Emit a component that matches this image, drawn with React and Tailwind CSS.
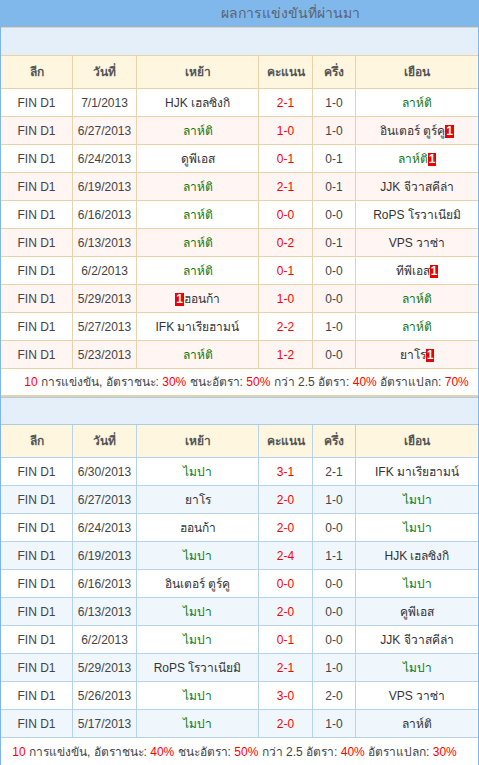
import React from "react";

// Past results for the two teams, shown as two stacked tables
const G = "g"; // marks the highlighted team (green)

const lahtiRows = [
  ["7/1/2013", ["HJK เฮลซิงกิ"], "2-1", "1-0", ["ลาห์ติ", G]],
  ["6/27/2013", ["ลาห์ติ", G], "1-0", "1-0", ["อินเตอร์ ตูร์คู", null, "r1"]],
  ["6/24/2013", ["ดูพีเอส"], "0-1", "0-1", ["ลาห์ติ", G, "r1"]],
  ["6/19/2013", ["ลาห์ติ", G], "2-1", "0-1", ["JJK จีวาสคีล่า"]],
  ["6/16/2013", ["ลาห์ติ", G], "0-0", "0-0", ["RoPS โรวาเนียมิ"]],
  ["6/13/2013", ["ลาห์ติ", G], "0-2", "0-1", ["VPS วาซ่า"]],
  ["6/2/2013", ["ลาห์ติ", G], "0-1", "0-0", ["ทีพีเอส", null, "r1"]],
  ["5/29/2013", ["ฮอนก้า", null, "l1"], "1-0", "0-0", ["ลาห์ติ", G]],
  ["5/27/2013", ["IFK มาเรียฮามน์"], "2-2", "1-0", ["ลาห์ติ", G]],
  ["5/23/2013", ["ลาห์ติ", G], "1-2", "0-0", ["ยาโร", null, "r1"]],
];

const mypaRows = [
  ["6/30/2013", ["ไมปา", G], "3-1", "2-1", ["IFK มาเรียฮามน์"]],
  ["6/27/2013", ["ยาโร"], "2-0", "1-0", ["ไมปา", G]],
  ["6/24/2013", ["ฮอนก้า"], "2-0", "0-0", ["ไมปา", G]],
  ["6/19/2013", ["ไมปา", G], "2-4", "1-1", ["HJK เฮลซิงกิ"]],
  ["6/16/2013", ["อินเตอร์ ตูร์คู"], "0-0", "0-0", ["ไมปา", G]],
  ["6/13/2013", ["ไมปา", G], "2-0", "0-0", ["คูพีเอส"]],
  ["6/2/2013", ["ไมปา", G], "0-1", "0-0", ["JJK จีวาสคีล่า"]],
  ["5/29/2013", ["RoPS โรวาเนียมิ"], "2-1", "1-0", ["ไมปา", G]],
  ["5/26/2013", ["ไมปา", G], "3-0", "2-0", ["VPS วาซ่า"]],
  ["5/17/2013", ["ไมปา", G], "2-0", "1-0", ["ลาห์ติ"]],
];

const Badge = () => (
  <span className="inline-block bg-[#ee0000] px-px text-[12px] leading-[13px] font-bold text-white">1</span>
);

const Team = ({ team }) => {
  const [name, green, badge] = team;
  return (
    <span className={green ? "text-[#117711]" : "text-[#333]"}>
      {badge === "l1" && <Badge />}
      {name}
      {badge === "r1" && <Badge />}
    </span>
  );
};

const Summary = ({ stats, className }) => (
  <div className={`flex h-[28px] items-center justify-center text-[12px] text-[#444] ${className}`}>
    <span>
      <span className="text-[#ff0000]">10</span> การแข่งขัน, อัตราชนะ:{" "}
      <span className="text-[#ff0000]">{stats[0]}</span> ชนะอัตรา:{" "}
      <span className="text-[#ff0000]">{stats[1]}</span> กว่า 2.5 อัตรา:{" "}
      <span className="text-[#ff0000]">{stats[2]}</span> อัตราแปลก:{" "}
      <span className="text-[#ff0000]">{stats[3]}</span>
    </span>
  </div>
);

const ResultsTable = ({ rows, line, alt }) => {
  const cell = `flex items-center justify-center border-r ${line}`;
  const cols = "grid grid-cols-[72px_64px_122px_54px_43px_1fr]";
  return (
    <div>
      <div className={`${cols} h-[33px] border-b ${line} bg-[#fff6e0] text-[12px] font-bold text-[#555]`}>
        {["ลีก", "วันที่", "เหย้า", "คะแนน", "ครึ่ง"].map((h) => (
          <div key={h} className={cell}>{h}</div>
        ))}
        <div className="flex items-center justify-center">เยือน</div>
      </div>
      {rows.map((r, i) => (
        <div
          key={i}
          className={`${cols} h-[28px] border-b ${line} text-[12px] text-[#444] ${i % 2 === 1 ? alt : "bg-white"}`}
        >
          <div className={cell}>FIN D1</div>
          <div className={cell}>{r[0]}</div>
          <div className={cell}><Team team={r[1]} /></div>
          <div className={`${cell} text-[#ff0000]`}>{r[2]}</div>
          <div className={cell}>{r[3]}</div>
          <div className="flex items-center justify-center"><Team team={r[4]} /></div>
        </div>
      ))}
    </div>
  );
};

export default function App() {
  return (
    <div className="w-[479px] bg-white font-['Liberation_Sans',Arial,sans-serif]">
      <div className="flex h-[27px] items-center justify-center bg-[#80b8ec] pl-[102px] text-[14px] text-[#5a6470]">
        ผลการแข่งขันที่ผ่านมา
      </div>
      <div className="border-x border-[#7fb5ea]">
        <div className="h-[29px] border-y border-[#e8d3a8] bg-[#e4eff9]" />
        <ResultsTable rows={lahtiRows} line="border-[#e8d3a8]" alt="bg-[#fff5f3]" />
        <Summary stats={["30%", "50%", "40%", "70%"]} className="border-b-2 border-[#e8d3a8] pl-[14px]" />
        <div className="h-[28px] border-y border-[#a9cdea] bg-[#e4eff9]" />
        <ResultsTable rows={mypaRows} line="border-[#b5d3ec]" alt="bg-[#eff7fd]" />
        <Summary stats={["40%", "50%", "40%", "30%"]} className="pr-[10px]" />
      </div>
    </div>
  );
}
